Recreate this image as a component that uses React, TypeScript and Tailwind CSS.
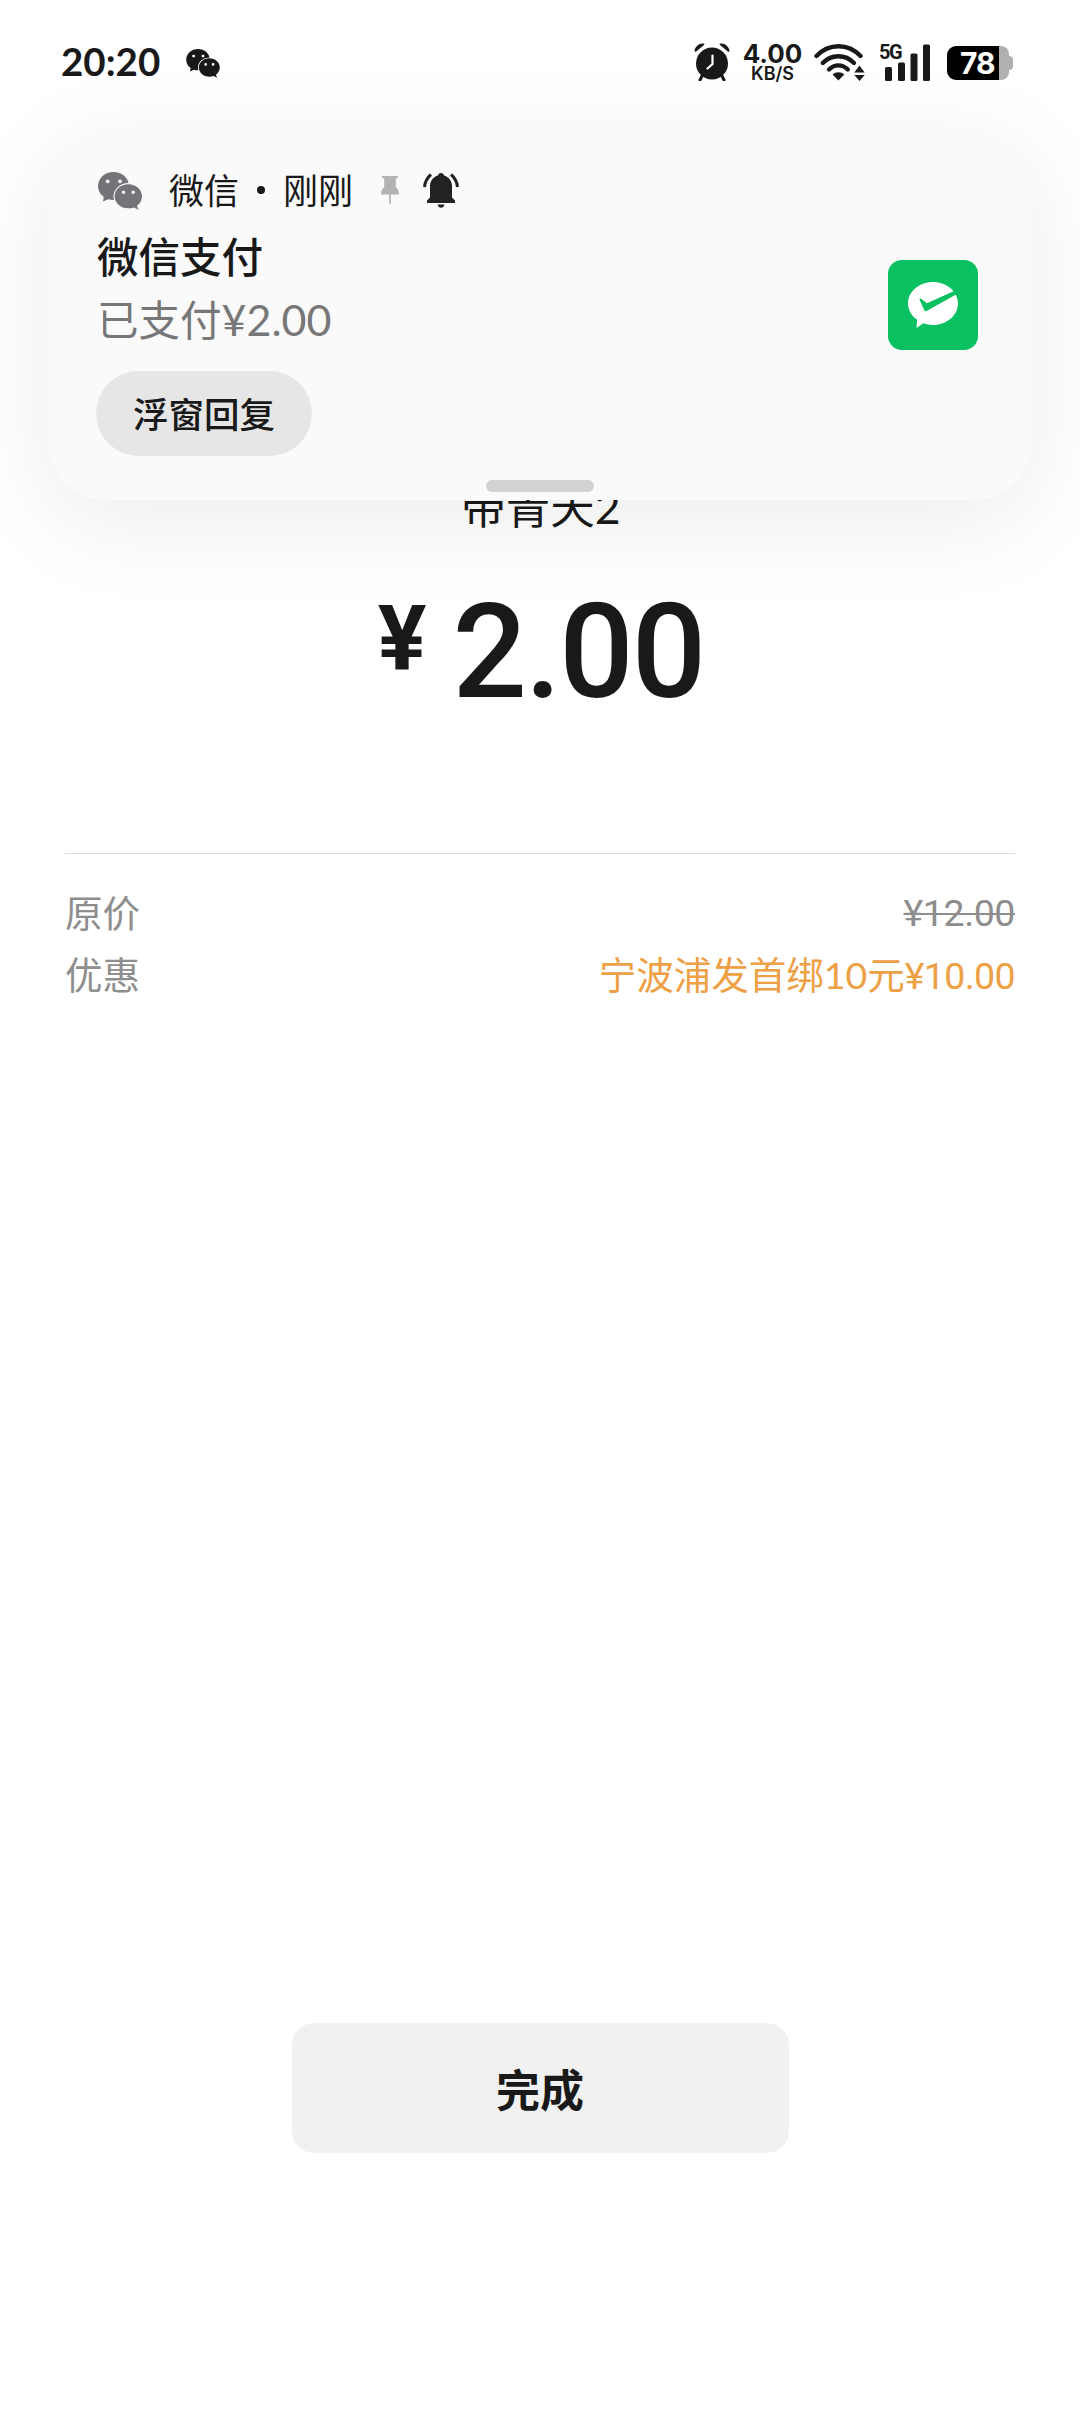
const CJK = "font-['Lato','Noto_Sans_CJK_SC',sans-serif]";

interface WeChatIconProps {
  className: string;
  gap: string;
}

const WeChatIcon: React.FC<WeChatIconProps> = ({ className, gap }) => (
  <svg viewBox="0 0 44 38" className={className} fill="currentColor">
    <path d="M15.5 0C24 0 31 6.2 31 14s-7 14-15.500 14c-1.900 0-3.700-.3-5.300-.8L5 29.500l.8-4.600C2.300 22.400 0 18.500 0 14 0 6.200 7 0 15.500 0z" />
    <circle cx="9.700" cy="9.300" r="1.900" fill={gap} />
    <circle cx="22" cy="9.300" r="1.900" fill={gap} />
    <path
      d="M30.300 12.200c7.600 0 13.700 5.400 13.700 12 0 3.900-2 7.300-5.100 9.500l1.600 4.100-4.500-2.400c-1.700.6-3.700.9-5.700.9-7.600 0-13.700-5.400-13.700-12.100 0-6.600 6.100-12 13.700-12z"
      stroke={gap}
      strokeWidth="2.200"
      paintOrder="stroke"
    />
    <circle cx="25.500" cy="20.200" r="1.700" fill={gap} />
    <circle cx="35.200" cy="20.200" r="1.700" fill={gap} />
  </svg>
);

const AlarmIcon = () => (
  <svg viewBox="0 0 36 38" className="h-[38px] w-[36px]" fill="#191919">
    <path d="M8 33l-2 4M28 33l2 4" stroke="#191919" strokeWidth="3" strokeLinecap="round" />
    <circle cx="18" cy="20.500" r="16" />
    <path d="M.5 7.500C1.500 3.500 5 0 9.500.6c1 .2 1.300.9.500 1.500L2.600 8.300C1.500 9.200.4 8.700.5 7.500z" />
    <path d="M35.500 7.500C34.500 3.500 31 0 26.500.6c-1 .2-1.300.9-.5 1.500l7.400 6.200c1.100.9 2.200.4 2.100-.8z" />
    <path d="M18.500 12.500v8.500l-5 4.500" fill="none" stroke="#fff" strokeWidth="2.200" strokeLinecap="round" />
  </svg>
);

const WifiIcon = () => (
  <svg viewBox="0 0 51 37" className="h-[37px] w-[51px]" fill="none" stroke="#191919">
    <g strokeWidth="4.400" strokeLinecap="round">
      <path d="M2.500 12C15 -1 34 -1 46.500 12" />
      <path d="M8.800 19C17.500 10 31.300 10 40 19" />
      <path d="M15 25.500C20.500 20 28.300 20 33.800 25.500" />
    </g>
    <path d="M18.600 30.600c3.300-3.200 8.400-3.200 11.700 0L24.400 36.500z" fill="#191919" stroke="none" />
    <path d="M45.500 21.500l5.200 7H40.300zM45.500 37l-5.200-6h10.400z" fill="#191919" stroke="none" />
  </svg>
);

const SignalBars = () => (
  <svg viewBox="0 0 45 37" className="h-[37px] w-[45px]" fill="#191919">
    <rect x="0" y="23" width="7" height="14" rx="1.500" />
    <rect x="13" y="18.500" width="7" height="18.500" rx="1.500" />
    <rect x="25.500" y="9.500" width="7" height="27.500" rx="1.500" />
    <rect x="38" y="0.500" width="7" height="36.500" rx="1.500" />
  </svg>
);

const PinIcon = () => (
  <svg viewBox="0 0 18 28" className="h-[28px] w-[18px]" fill="#b3b3b3">
    <path d="M1 0h16v1.800l-2.200.8v8.600c2 1.300 3.200 3.800 3.200 7.300H0c0-3.500 1.200-6 3.200-7.300V2.600L1 1.800z" />
    <path d="M8.200 18h1.700v10H8.200z" />
  </svg>
);

const BellIcon = () => (
  <svg viewBox="0 0 36 35" className="h-[35px] w-[36px]" fill="#222">
    <path d="M18 0c1.600 0 2.800 1 3 2.500 4.600 1.300 8 5.500 8 10.500v11.500L32 27.500V30H4v-2.500l3-3V13c0-5 3.400-9.200 8-10.500C15.200 1 16.400 0 18 0z" />
    <path d="M14.700 31.500h6.600c0 1.800-1.400 3.300-3.300 3.300s-3.300-1.500-3.300-3.300z" />
    <path d="M8 1.500C4.500 4.500 2 8.800 1.500 14M28 1.500c3.500 3 6 7.300 6.500 12.500" fill="none" stroke="#222" strokeWidth="3" />
  </svg>
);

const PayIcon = () => (
  <svg viewBox="0 0 90 90" className="size-[90px] rounded-[14px] bg-[#09c160]">
    <path
      d="M45 22c13.800 0 25 9.600 25 21.500S58.800 65 45 65c-3.500 0-6.700-.6-9.700-1.700L28.500 68l.6-8.200C23.500 55.900 20 50 20 43.500 20 31.600 31.200 22 45 22z"
      fill="#fff"
    />
    <path d="M31.300 39q.8-1 2 0l5.700 4.300L65 31.500h3l1 2.500-30.500 17q-1.500.6-2.300-1z" fill="#09c160" />
  </svg>
);

const StatusBar = () => (
  <header className="flex h-[124px] items-start justify-between pl-[61px] pr-[67px] pt-[41px] text-[#191919]">
    <div className="flex h-[42px] items-center">
      <span className="-mt-[3px] w-[125px] font-['Lato'] text-[38.500px] leading-[42px] font-bold">20:20</span>
      <WeChatIcon className="mt-[2px] h-[29px] w-[34px]" gap="#fff" />
    </div>
    <div className="flex h-[42px] items-center">
      <AlarmIcon />
      <div className="ml-[12px] flex w-[61px] flex-col items-center pt-[1px] font-['Inter'] font-bold">
        <span className="text-[26px] leading-[21px]">4.00</span>
        <span className="text-[18px] leading-[19px] font-semibold">KB/S</span>
      </div>
      <div className="ml-[11px]">
        <WifiIcon />
      </div>
      <div className="relative ml-[20px]">
        <SignalBars />
        <span className="absolute -left-[6px] -top-[2px] font-['Roboto'] text-[20px] leading-[20px] font-bold tracking-[-1.500px]">5G</span>
      </div>
      <div className="ml-[17px] flex items-center pt-[2px]">
        <div className="h-[34px] w-[52px] rounded-l-[9px] bg-black pl-[13px] font-['Inter'] text-[30px] leading-[35px] font-bold tracking-[-1px] text-white">
          78
        </div>
        <div className="h-[34px] w-[10px] rounded-r-[8px] bg-[#b0b0b0]" />
        <div className="h-[14px] w-[4px] rounded-r-[4px] bg-[#b0b0b0]" />
      </div>
    </div>
  </header>
);

const NotificationCard = () => (
  <section className="absolute left-[48px] top-[132px] flex h-[368px] w-[984px] flex-col rounded-[60px] bg-[#fafafa] pl-[48px] pr-[54px] pt-[36px] shadow-[0_20px_100px_rgba(0,0,0,0.08)]">
    <div className="flex h-[44px] items-center text-[35px] leading-[44px] text-[#191919]">
      <WeChatIcon className="ml-[2px] mr-[27px] mt-[2px] h-[38px] w-[44px] text-[#737477]" gap="#fafafa" />
      <span>微信</span>
      <span className="mx-[18px] size-[8px] rounded-full bg-[#191919]" />
      <span>刚刚</span>
      <div className="ml-[28px] mr-[24px]">
        <PinIcon />
      </div>
      <BellIcon />
    </div>
    <div className="flex items-start justify-between">
      <div className="pl-[1px]">
        <p className="mt-[15px] text-[41.500px] leading-[60px] font-medium text-[#191919]">微信支付</p>
        <p className="text-[41.500px] leading-[66px] text-[#777]">
          已支付<span className="text-[43px]">¥2.00</span>
        </p>
      </div>
      <div className="mt-[48px]">
        <PayIcon />
      </div>
    </div>
    <button className="mt-[18px] h-[85px] w-[216px] shrink-0 rounded-full bg-[#e6e6e6] pt-[3px] text-[35.500px] font-medium text-[#191919]">
      浮窗回复
    </button>
    <div className="absolute bottom-[8px] left-[438px] h-[12px] w-[108px] rounded-full bg-[#d2d2d2]" />
  </section>
);

export default function App() {
  return (
    <div className={`relative flex h-[2412px] w-[1080px] flex-col overflow-hidden bg-white ${CJK}`}>
      <StatusBar />
      <main className="flex grow flex-col px-[65px] pt-[353px] text-[#191919]">
        <h1 className="pl-[2px] text-center text-[44.500px] leading-[60px]">带青天2</h1>
        <div className="mt-[40px] flex items-start justify-center pl-[2px] font-['Roboto'] font-medium">
          <span className="mr-[26px] mt-[14px] text-[91px] leading-[96px] font-bold">¥</span>
          <span className="text-[131px] leading-[150px] tracking-[-2px]">2.00</span>
        </div>
        <div className="mt-[126px] border-t border-[#dedede] pt-[28px] text-[37.500px] leading-[62px] text-[#8e8e8e]">
          <div className="flex justify-between">
            <span>原价</span>
            <span className="font-['Roboto'] tracking-[-0.400px] line-through decoration-[2px]">¥12.00</span>
          </div>
          <div className="flex justify-between">
            <span>优惠</span>
            <span className="text-[#eda045]">
              宁波浦发首绑10元<span className="font-['Roboto'] tracking-[-0.600px]">¥10.00</span>
            </span>
          </div>
        </div>
        <button className="mb-[259px] mt-auto h-[130px] w-[497px] self-center rounded-[22px] bg-[#f1f1f1] pt-[4px] text-[44px] font-bold">
          完成
        </button>
      </main>
      <NotificationCard />
    </div>
  );
}
